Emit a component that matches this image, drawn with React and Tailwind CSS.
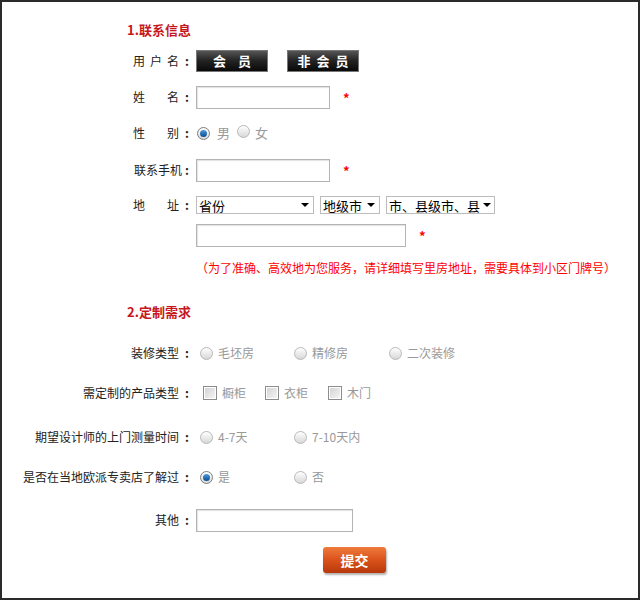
const font = { fontFamily: '"Noto Sans CJK SC", "Liberation Sans", sans-serif' }

function Radio({ checked }) {
  return (
    <span
      className={`inline-flex items-center justify-center w-[13px] h-[13px] rounded-full border shrink-0 bg-gradient-to-b from-white to-[#d8d8d8] ${
        checked ? 'border-[#7d7d7d]' : 'border-[#b8b8b8]'
      }`}
    >
      {checked && <span className="w-[7px] h-[7px] rounded-full bg-gradient-to-b from-[#4a9be0] to-[#0b4c8c]" />}
    </span>
  )
}

function Checkbox() {
  return (
    <span className="inline-flex items-center justify-center w-[14px] h-[14px] border border-[#8c8c8c] bg-white shrink-0">
      <span className="w-[10px] h-[10px] bg-gradient-to-br from-[#d4d4d4] to-[#f4f4f4]" />
    </span>
  )
}

function Input({ w }) {
  return <div className={`${w} h-[23px] border border-[#b4b4b4] bg-white shadow-[inset_1px_1px_1px_rgba(0,0,0,0.12)]`} />
}

function Star() {
  return <span className="text-[#f00] text-[13px] font-bold ml-[13px] leading-none">*</span>
}

function Select({ w, text }) {
  return (
    <div className={`${w} h-[18px] border border-[#bcbcbc] bg-white flex items-center justify-between pl-[2px] pr-[4px] text-[13px] text-black leading-none whitespace-nowrap`}>
      <span>{text}</span>
      <span className="ml-[3px] w-0 h-0 border-l-[4px] border-r-[4px] border-t-[4px] border-l-transparent border-r-transparent border-t-black" />
    </div>
  )
}

function Colon({ ml }) {
  return <span className={`${ml} mr-[2px] font-bold`}>:</span>
}

function Label({ chars, w = 'w-[46px]', ml = 'ml-[6px]' }) {
  return (
    <div className="w-[189px] shrink-0 flex justify-end items-center text-[12px] text-[#222] whitespace-nowrap">
      <div className={`${w} flex justify-between`}>
        {chars.map((c, i) => <span key={i}>{c}</span>)}
      </div>
      <Colon ml={ml} />
    </div>
  )
}

function RLabel({ text }) {
  return (
    <div className="w-[189px] shrink-0 flex justify-end items-center text-[12px] text-[#222] whitespace-nowrap">
      <span>{text}</span>
      <Colon ml="ml-[6px]" />
    </div>
  )
}

function DarkBtn({ children, ml, track }) {
  return (
    <div className={`${ml} w-[72px] h-[22px] flex items-center justify-center bg-gradient-to-b from-[#555] via-[#222] to-[#0a0a0a] border border-[#777] text-white text-[13px] font-bold whitespace-nowrap ${track}`}>
      {children}
    </div>
  )
}

function Opt({ children, w }) {
  return <div className={`${w} flex items-center gap-[5px] text-[12px] text-[#999] whitespace-nowrap`}>{children}</div>
}

export default function App() {
  return (
    <div style={font} className="w-[640px] h-[600px] border-2 border-[#2b2b2b] bg-white overflow-hidden">
      <div className="pt-[18px]">
        <div className="h-[20px] flex items-center pl-[125px] text-[13px] font-bold text-[#c8161d]">1.联系信息</div>

        <div className="mt-[9px] h-[24px] flex items-center">
          <Label chars={['用', '户', '名']} />
          <DarkBtn ml="ml-[5px]" track="tracking-[12px] pl-[12px]">会员</DarkBtn>
          <DarkBtn ml="ml-[19px]" track="tracking-[6px] pl-[6px]">非会员</DarkBtn>
        </div>

        <div className="mt-[12px] h-[24px] flex items-center">
          <Label chars={['姓', '名']} />
          <div className="ml-[5px]"><Input w="w-[134px]" /></div>
          <Star />
        </div>

        <div className="mt-[12px] h-[24px] flex items-center">
          <Label chars={['性', '别']} />
          <div className="ml-[6px] flex items-center text-[13px] text-[#999]">
            <Radio checked />
            <span className="ml-[7px]">男</span>
            <span className="ml-[7px]"><Radio /></span>
            <span className="ml-[5px]">女</span>
          </div>
        </div>

        <div className="mt-[13px] h-[24px] flex items-center">
          <Label chars={['联系手机']} w="w-[48px]" ml="ml-[3px]" />
          <div className="ml-[5px]"><Input w="w-[134px]" /></div>
          <Star />
        </div>

        <div className="mt-[11px] h-[24px] flex items-center">
          <Label chars={['地', '址']} />
          <div className="ml-[5px] flex items-center gap-[6px]">
            <Select w="w-[118px]" text="省份" />
            <Select w="w-[60px]" text="地级市" />
            <Select w="w-[109px]" text="市、县级市、县" />
          </div>
        </div>

        <div className="mt-[6px] h-[24px] flex items-center pl-[194px]">
          <Input w="w-[210px]" />
          <Star />
        </div>

        <div className="mt-[9px] h-[24px] flex items-center pl-[194px] text-[12px] text-[#f00] whitespace-nowrap">
          （为了准确、高效地为您服务，请详细填写里房地址，需要具体到小区门牌号）
        </div>

        <div className="mt-[22px] h-[20px] flex items-center pl-[125px] text-[13px] font-bold text-[#c8161d]">2.定制需求</div>

        <div className="mt-[19px] h-[24px] flex items-center">
          <RLabel text="装修类型" />
          <div className="ml-[9px] flex items-center">
            <Opt w="w-[94px]"><Radio /><span>毛坯房</span></Opt>
            <Opt w="w-[95px]"><Radio /><span>精修房</span></Opt>
            <Opt w="w-[90px]"><Radio /><span>二次装修</span></Opt>
          </div>
        </div>

        <div className="mt-[16px] h-[24px] flex items-center">
          <RLabel text="需定制的产品类型" />
          <div className="ml-[12px] flex items-center">
            <Opt w="w-[62px]"><Checkbox /><span>橱柜</span></Opt>
            <Opt w="w-[63px]"><Checkbox /><span>衣柜</span></Opt>
            <Opt w="w-[60px]"><Checkbox /><span>木门</span></Opt>
          </div>
        </div>

        <div className="mt-[20px] h-[24px] flex items-center">
          <RLabel text="期望设计师的上门测量时间" />
          <div className="ml-[9px] flex items-center">
            <Opt w="w-[94px]"><Radio /><span>4-7天</span></Opt>
            <Opt w="w-[95px]"><Radio /><span>7-10天内</span></Opt>
          </div>
        </div>

        <div className="mt-[16px] h-[24px] flex items-center">
          <RLabel text="是否在当地欧派专卖店了解过" />
          <div className="ml-[9px] flex items-center">
            <Opt w="w-[94px]"><Radio checked /><span>是</span></Opt>
            <Opt w="w-[95px]"><Radio /><span>否</span></Opt>
          </div>
        </div>

        <div className="mt-[19px] h-[24px] flex items-center">
          <RLabel text="其他" />
          <div className="ml-[5px]"><Input w="w-[157px]" /></div>
        </div>

        <div className="mt-[15px] flex pl-[321px]">
          <div className="w-[63px] h-[26px] rounded-[3px] flex items-center justify-center bg-gradient-to-b from-[#f07a3c] via-[#d9521a] to-[#b8380b] text-white text-[14px] font-bold shadow-[1px_2px_2px_rgba(0,0,0,0.3)]">
            提交
          </div>
        </div>
      </div>
    </div>
  )
}
